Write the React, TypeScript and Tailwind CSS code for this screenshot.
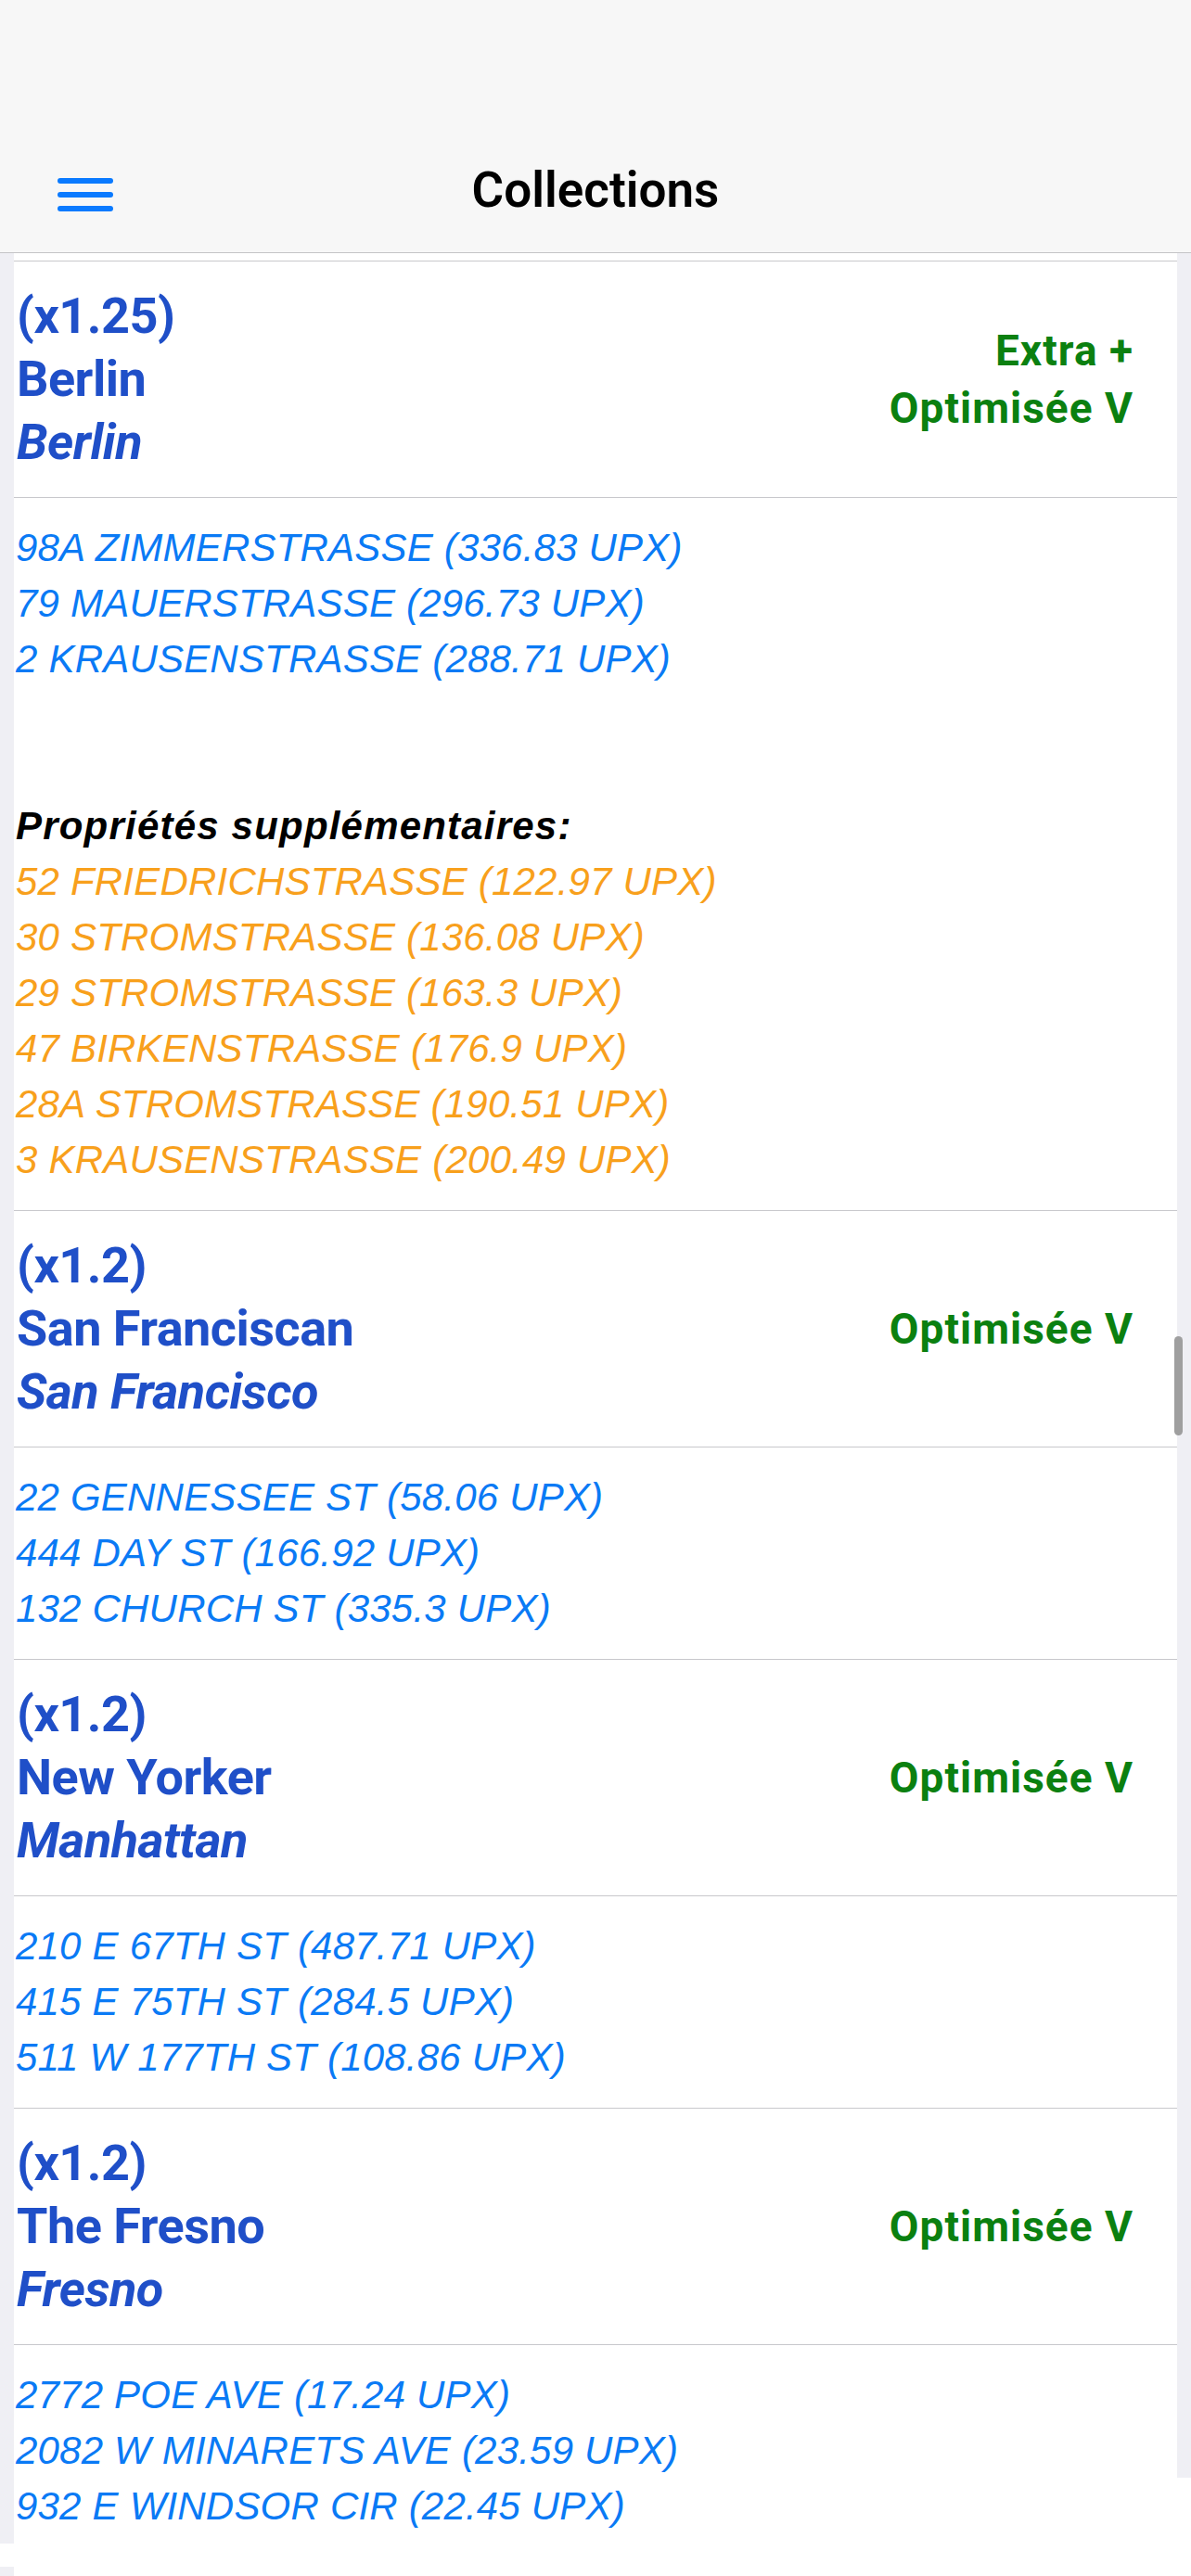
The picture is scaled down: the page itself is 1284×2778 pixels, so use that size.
const FONT = 'font-["Roboto","Liberation_Sans",sans-serif]'

type Header = { mult: string; name: string; city: string; tags: string[] }
type Detail = { main: string[]; extra?: string[] }

const sections: { header: Header; detail: Detail }[] = [
  {
    header: { mult: '(x1.25)', name: 'Berlin', city: 'Berlin', tags: ['Extra +', 'Optimisée V'] },
    detail: {
      main: ['98A ZIMMERSTRASSE (336.83 UPX)', '79 MAUERSTRASSE (296.73 UPX)', '2 KRAUSENSTRASSE (288.71 UPX)'],
      extra: [
        '52 FRIEDRICHSTRASSE (122.97 UPX)',
        '30 STROMSTRASSE (136.08 UPX)',
        '29 STROMSTRASSE (163.3 UPX)',
        '47 BIRKENSTRASSE (176.9 UPX)',
        '28A STROMSTRASSE (190.51 UPX)',
        '3 KRAUSENSTRASSE (200.49 UPX)',
      ],
    },
  },
  {
    header: { mult: '(x1.2)', name: 'San Franciscan', city: 'San Francisco', tags: ['Optimisée V'] },
    detail: { main: ['22 GENNESSEE ST (58.06 UPX)', '444 DAY ST (166.92 UPX)', '132 CHURCH ST (335.3 UPX)'] },
  },
  {
    header: { mult: '(x1.2)', name: 'New Yorker', city: 'Manhattan', tags: ['Optimisée V'] },
    detail: { main: ['210 E 67TH ST (487.71 UPX)', '415 E 75TH ST (284.5 UPX)', '511 W 177TH ST (108.86 UPX)'] },
  },
  {
    header: { mult: '(x1.2)', name: 'The Fresno', city: 'Fresno', tags: ['Optimisée V'] },
    detail: { main: ['2772 POE AVE (17.24 UPX)', '2082 W MINARETS AVE (23.59 UPX)', '932 E WINDSOR CIR (22.45 UPX)'] },
  },
]

function HeaderRow({ h }: { h: Header }) {
  return (
    <div className="flex items-center justify-between border-t border-[#c8c8cc] py-[25px] pl-[3px] pr-[47px]">
      <div className="flex flex-col text-[54px] leading-[68px] font-bold text-[#1f4fc8] tracking-[-0.5px]">
        <span>{h.mult}</span>
        <span>{h.name}</span>
        <span className="italic">{h.city}</span>
      </div>
      <div className="flex flex-col items-end text-[46px] leading-[62px] font-bold text-[#0b8010] tracking-[1px]">
        {h.tags.map(t => (
          <span key={t}>{t}</span>
        ))}
      </div>
    </div>
  )
}

function DetailRow({ d }: { d: Detail }) {
  return (
    <div className='flex flex-col border-t border-[#c8c8cc] py-[24px] pl-[2px] font-["Liberation_Sans",Arial,sans-serif] text-[42px] leading-[60px] italic tracking-[0.2px]'>
      {d.main.map(a => (
        <span key={a} className="text-[#0a7af5]">{a}</span>
      ))}
      {d.extra && (
        <>
          <div className="h-[120px]" />
          <span className="font-bold text-black tracking-[1.2px]">Propriétés supplémentaires:</span>
          {d.extra.map(a => (
            <span key={a} className="text-[#f8a01c]">{a}</span>
          ))}
        </>
      )}
    </div>
  )
}

export default function App() {
  return (
    <div className={`relative w-[1284px] h-[2778px] overflow-hidden bg-white ${FONT}`}>
      <header className="h-[273px] bg-[#f7f7f7] border-b border-[#c4c4c6] flex flex-col justify-end">
        <div className="relative h-[132px] flex items-center justify-center">
          <button className="absolute left-[62px] top-[52px]" aria-label="Menu">
            <svg width="60" height="36" viewBox="0 0 60 36">
              <g stroke="#0a7aff" strokeWidth="6" strokeLinecap="round">
                <line x1="3" y1="3" x2="57" y2="3" />
                <line x1="3" y1="18" x2="57" y2="18" />
                <line x1="3" y1="33" x2="57" y2="33" />
              </g>
            </svg>
          </button>
          <h1 className="text-[53px] font-semibold text-black">Collections</h1>
        </div>
      </header>

      <div className="flex">
        <div className="w-[15px] flex flex-col">
          <div className="h-[2470px] bg-[#efeff4]" />
          <div className="h-[25px] bg-white" />
          <div className="h-[40px] bg-[#efeff4]" />
        </div>
        <main className="flex-1 bg-white">
          <div className="h-[8px]" />
          {sections.map((s, i) => (
            <div key={i}>
              <HeaderRow h={s.header} />
              <DetailRow d={s.detail} />
            </div>
          ))}
        </main>
        <div className="w-[15px] flex flex-col">
          <div className="h-[2399px] bg-[#efeff4]" />
        </div>
      </div>

      <div className="absolute left-[1266px] top-[1441px] w-[9px] h-[107px] rounded-full bg-[#9f9f9f]" />
    </div>
  )
}
